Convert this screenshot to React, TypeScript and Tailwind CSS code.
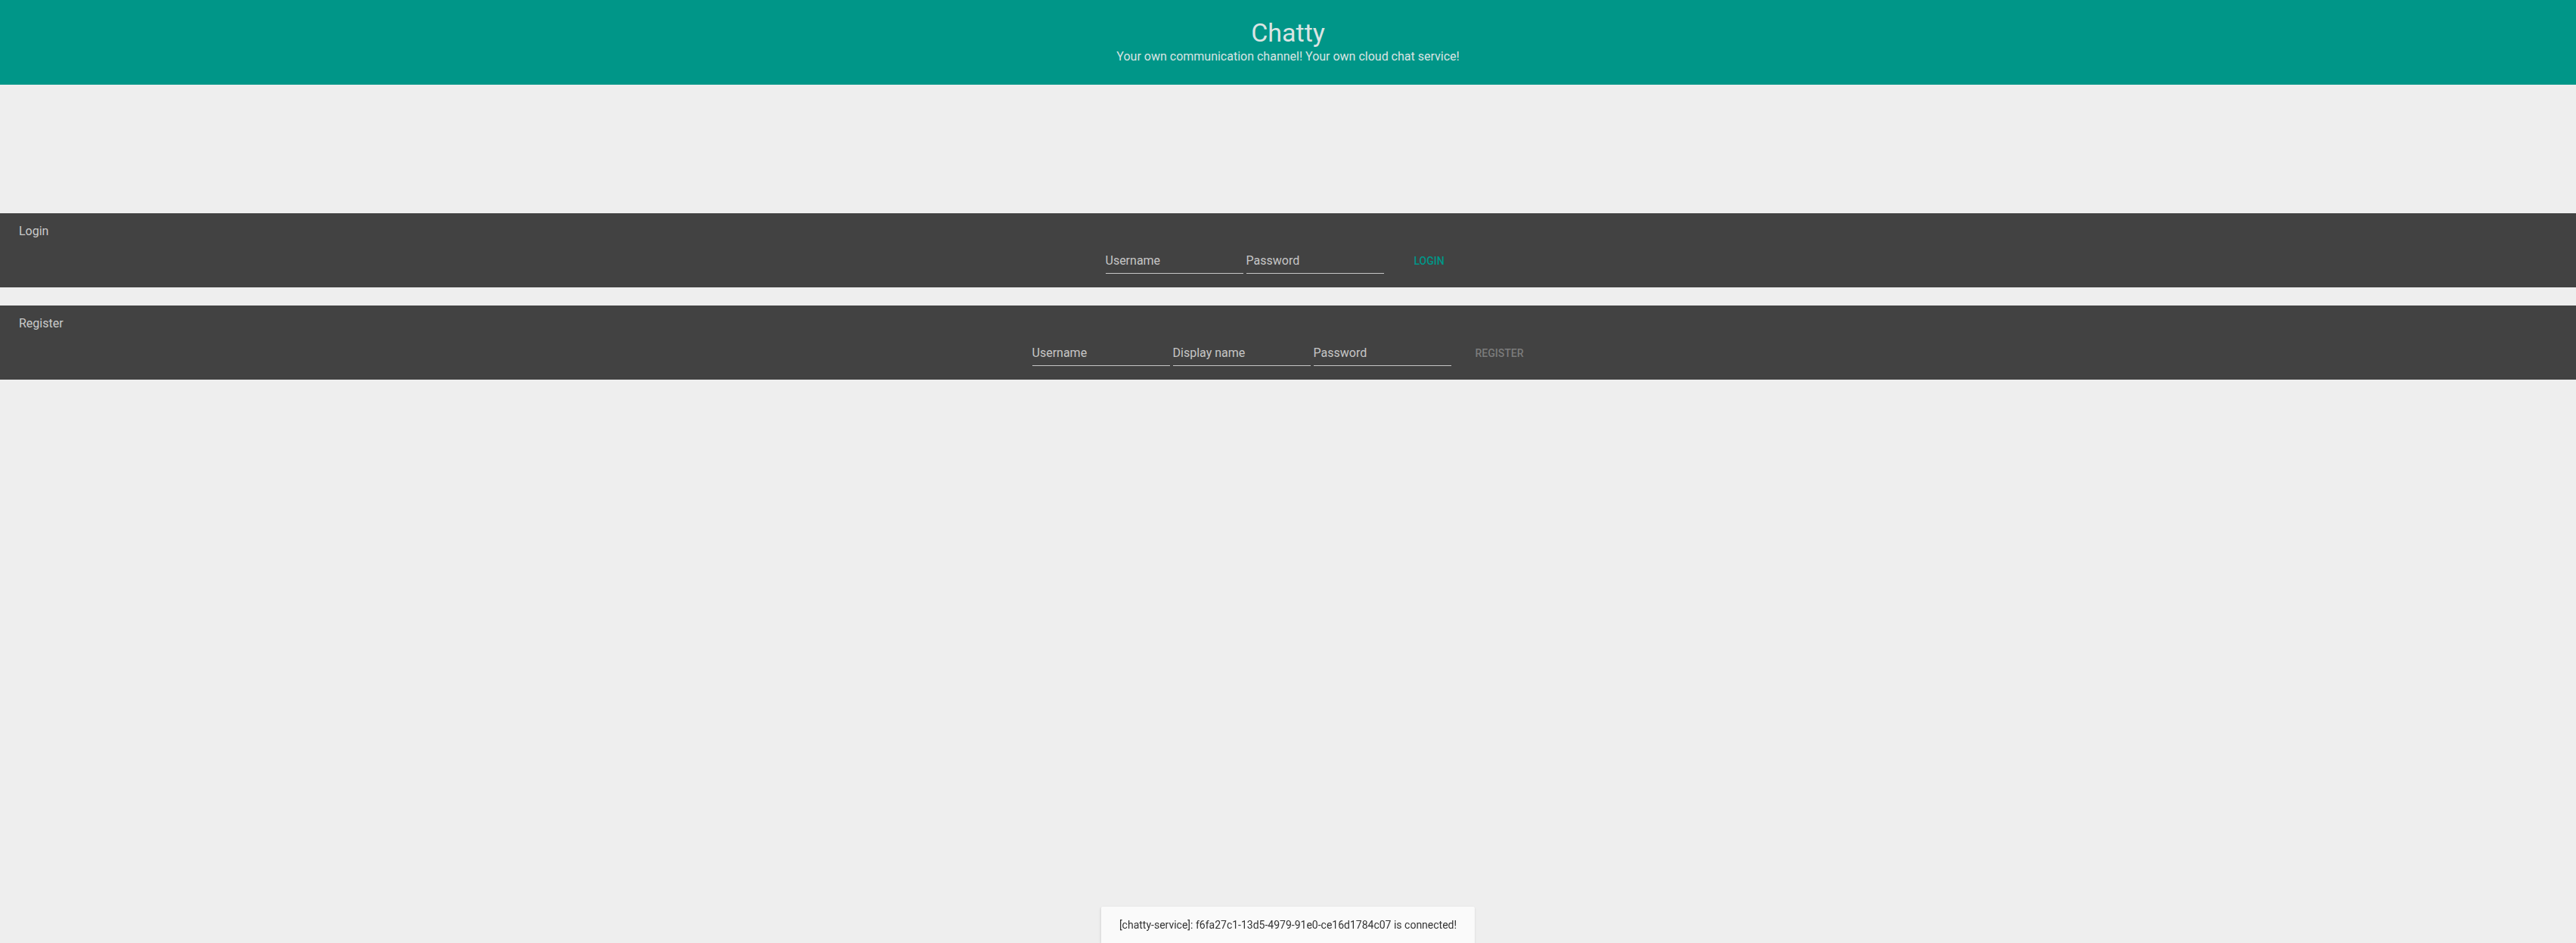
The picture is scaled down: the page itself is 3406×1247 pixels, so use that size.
import { useState } from "react";

const font = { fontFamily: "Roboto, 'Noto Sans', sans-serif" };

function Field({ placeholder, type = "text" }: { placeholder: string; type?: string }) {
  const [value, setValue] = useState("");
  return (
    <div className="w-[182px] border-b border-[#c6c6c6] pb-1">
      <input
        type={type}
        value={value}
        onChange={(e) => setValue(e.target.value)}
        placeholder={placeholder}
        className="block w-full bg-transparent text-[16px] leading-6 text-[#e0e0e0] outline-none placeholder:text-[#c6c6c6]"
      />
    </div>
  );
}

function Panel({ title, children }: { title: string; children: React.ReactNode }) {
  return (
    <section className="bg-[#424242] pl-[25px] pr-6 pt-3">
      <h2 className="text-[16px] leading-6 font-normal text-[#cacaca]">{title}</h2>
      <div className="mt-[15px] mb-[18px] flex items-end justify-center pr-3">{children}</div>
    </section>
  );
}

export default function App() {
  return (
    <div className="relative min-h-screen bg-[#eeeeee]" style={font}>
      <header className="flex h-[112px] flex-col items-center bg-[#009688] pt-[23px] text-[#dbe4e3]">
        <h1 className="text-[34px] leading-[40px] font-normal">Chatty</h1>
        <p className="text-[16px] leading-6">Your own communication channel! Your own cloud chat service!</p>
      </header>

      <main className="mt-[170px] flex flex-col gap-6">
        <Panel title="Login">
          <div className="flex gap-1">
            <Field placeholder="Username" />
            <Field placeholder="Password" type="password" />
          </div>
          <button className="ml-4 mb-[5px] min-w-[88px] px-4 text-[14px] leading-6 font-medium uppercase text-[#009688]">
            Login
          </button>
        </Panel>

        <Panel title="Register">
          <div className="flex gap-1">
            <Field placeholder="Username" />
            <Field placeholder="Display name" />
            <Field placeholder="Password" type="password" />
          </div>
          <button
            disabled
            className="ml-4 mb-[5px] min-w-[88px] px-4 text-[14px] leading-6 font-medium uppercase text-[#7b7b7b]"
          >
            Register
          </button>
        </Panel>
      </main>

      {/* snackbar */}
      <div className="fixed bottom-0 left-1/2 -translate-x-1/2 rounded-t-[2px] bg-[#fafafa] px-6 py-[14px] text-[14px] leading-5 text-[#333333] shadow-sm">
        [chatty-service]: f6fa27c1-13d5-4979-91e0-ce16d1784c07 is connected!
      </div>
    </div>
  );
}
